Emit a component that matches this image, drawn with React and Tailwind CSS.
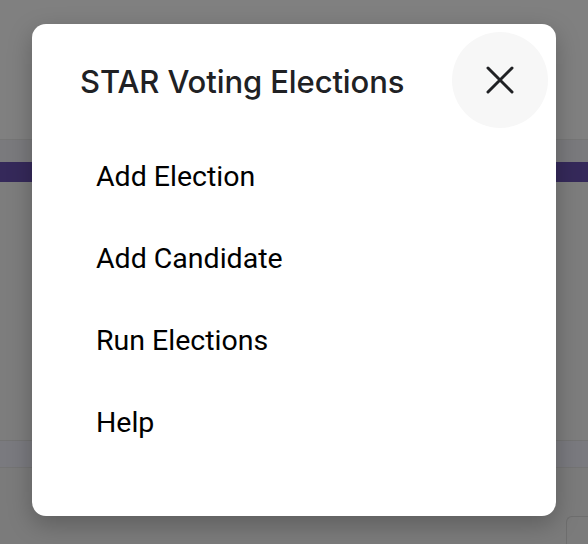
import React from 'react';

const items = ['Add Election', 'Add Candidate', 'Run Elections', 'Help'];

export default function App() {
  return (
    <div className="relative w-[588px] h-[544px] overflow-hidden bg-[#7d7d7d]">
      {/* page underneath the backdrop */}
      <div className="flex flex-col h-full">
        <div className="h-[140px] bg-[#808080]" />
        <div className="h-px bg-[#767676]" />
        <div className="h-[22px] bg-[#7a7a7d]" />
        <div className="h-[20px] bg-[#35295a]" />
        <div className="h-[259px] bg-[#7d7d7d]" />
        <div className="h-px bg-[#737373]" />
        <div className="h-[26px] bg-[#7a7a7f]" />
        <div className="h-px bg-[#747474]" />
        <div className="flex-1 flex bg-[#7b7b7b]">
          <div className="w-[437px]" />
          <div className="flex-1 flex items-end justify-end pt-[48px]">
            <div className="w-[22px] h-[28px] rounded-tl-[6px] border-l border-t border-[#6e6e6e]" />
          </div>
        </div>
      </div>

      {/* dialog */}
      <div className="absolute left-[32px] top-[24px] w-[524px] h-[492px] bg-white rounded-[14px] shadow-[0_8px_24px_rgba(0,0,0,0.25)] flex flex-col">
        <div className="flex items-start justify-between pl-[48px] pr-[8px] pt-[8px]">
          <h2 className="pt-[34px] text-[31px] leading-none font-medium text-[#202124] font-['Inter',sans-serif] tracking-[-0.1px]">
            STAR Voting Elections
          </h2>
          <button className="w-[96px] h-[96px] rounded-full bg-[#f7f7f7] flex items-center justify-center">
            <svg width="28" height="28" viewBox="0 0 28 28" fill="none" stroke="#202124" strokeWidth="3" strokeLinecap="round">
              <path d="M2 2l24 24M26 2L2 26" />
            </svg>
          </button>
        </div>
        <ul className="flex flex-col pl-[64px] pt-[8px] font-['Roboto',sans-serif] text-[28.5px] text-black">
          {items.map((it) => (
            <li key={it} className="h-[82px] flex items-center">{it}</li>
          ))}
        </ul>
      </div>
    </div>
  );
}
